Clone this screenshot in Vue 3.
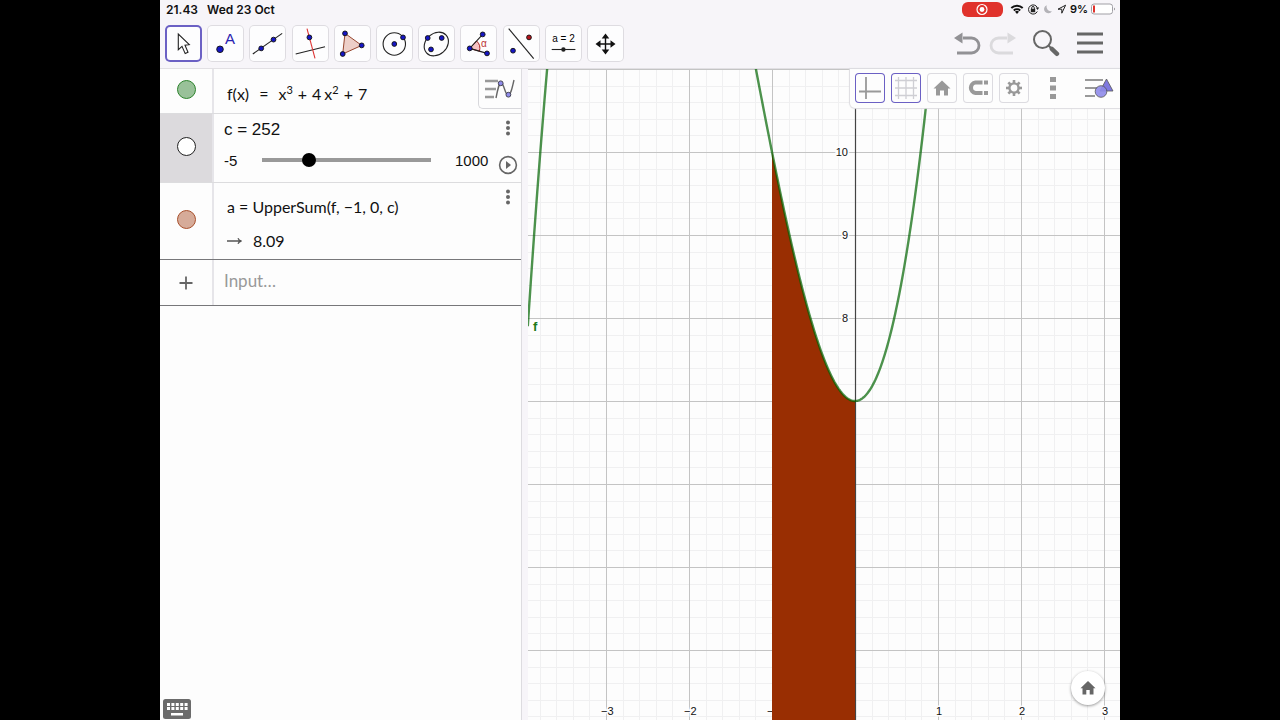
<template>
  <div class="stage">
    <div class="tablet">
      <header class="top">
        <div class="status">
          <span class="time">21.43</span>
          <span>Wed 23 Oct</span>
          <svg class="status-icons" width="108" height="18" viewBox="0 0 108 18">
            <rect x="1" y="2" width="41" height="15" rx="6" fill="#e0322c" />
            <circle cx="21" cy="9.5" r="5" fill="none" stroke="#fff" stroke-width="1.2" />
            <circle cx="21" cy="9.5" r="2.4" fill="#fff" />
            <g fill="none" stroke="#111" stroke-width="2">
              <path d="M50.3 8 A8.2 8.2 0 0 1 61.7 8" />
              <path d="M52.8 10.5 A4.8 4.8 0 0 1 59.2 10.5" />
            </g>
            <path d="M56 14 L54 11.8 A2.8 2.8 0 0 1 58 11.8 Z" fill="#111" />
            <path d="M76.3 7.5 A4.6 4.6 0 1 0 76.3 11.5" fill="none" stroke="#222" />
            <path d="M74.7 7.6 H78.2 L76.6 10 Z" fill="#222" />
            <rect x="69.8" y="8.8" width="4.4" height="3.4" fill="#222" />
            <path d="M70.7 9 V7.8 A1.3 1.3 0 0 1 73.3 7.8 V9" fill="none" stroke="#222" />
            <path d="M85.8 5.2 A4.2 4.2 0 1 0 90.9 11.2 A4.6 4.6 0 0 1 85.8 5.2 Z" fill="#b4b3b8" />
            <path d="M104.6 5.2 L97 9.2 H100.8 V13.2 Z" fill="none" stroke="#222" stroke-linejoin="round" />
          </svg>
          <span class="percent">9%</span>
          <svg width="25" height="12" viewBox="0 0 25 12">
            <rect x="0.5" y="1" width="21" height="10" rx="2.5" fill="#fff" stroke="#a09fa5" />
            <rect x="2" y="2.5" width="2" height="7" fill="#e0322c" />
            <path d="M23 4.5 Q24.5 6 23 7.5 Z" fill="#555" />
          </svg>
        </div>
        <div class="toolbar">
          <div class="tools">
            <button class="tool selected" aria-label="Move">
              <svg viewBox="0 0 37 37"><path d="M13.3 9 V24.7 L17 21.4 L20.2 28.6 L23 27.3 L20 20.3 L24.3 19.7 Z" fill="#fff" stroke="#222" stroke-width="1.1" /></svg>
            </button>
            <button class="tool" aria-label="Point">
              <svg viewBox="0 0 37 37">
                <circle cx="13" cy="24.3" r="3.3" class="dot" />
                <text x="18" y="19" class="point-name">A</text>
              </svg>
            </button>
            <button class="tool" aria-label="Line">
              <svg viewBox="0 0 37 37">
                <path d="M3.8 29 L33.2 8.4" class="ink" />
                <circle cx="12.2" cy="23.4" r="2.4" class="dot" />
                <circle cx="24.5" cy="14.6" r="2.4" class="dot" />
              </svg>
            </button>
            <button class="tool" aria-label="Perpendicular Line">
              <svg viewBox="0 0 37 37">
                <path d="M3.7 29 L33 21.7" class="ink" />
                <path d="M15 3.7 L23 33.4" class="ink red" />
                <circle cx="17.4" cy="12.4" r="2.4" class="dot" />
              </svg>
            </button>
            <button class="tool" aria-label="Polygon">
              <svg viewBox="0 0 37 37">
                <path d="M11 8.4 L27.7 20.4 L8.7 29 Z" fill="#edcfc8" stroke="#96452c" />
                <circle cx="11" cy="8.4" r="2.4" class="dot" />
                <circle cx="27.7" cy="20.4" r="2.4" class="dot" />
                <circle cx="8.7" cy="29" r="2.4" class="dot" />
              </svg>
            </button>
            <button class="tool" aria-label="Circle with Center">
              <svg viewBox="0 0 37 37">
                <circle cx="18.3" cy="19" r="11.2" class="ink" />
                <circle cx="18.3" cy="19" r="2.4" class="dot" />
                <circle cx="27" cy="12.4" r="2.4" class="dot" />
              </svg>
            </button>
            <button class="tool" aria-label="Ellipse">
              <svg viewBox="0 0 37 37">
                <ellipse cx="18.3" cy="19" rx="13.2" ry="10.6" transform="rotate(-42 18.3 19)" class="ink" />
                <circle cx="9.7" cy="13" r="2.4" class="dot" />
                <circle cx="23.7" cy="13" r="2.4" class="dot" />
                <circle cx="13" cy="24.4" r="2.4" class="dot" />
              </svg>
            </button>
            <button class="tool" aria-label="Angle">
              <svg viewBox="0 0 37 37">
                <path d="M9.7 23.4 L16.6 16 A10 10 0 0 1 19.4 26.2 Z" fill="#f7c3c3" stroke="#a22" />
                <path d="M22.7 9.4 L9.7 23.4 L27 28.4" class="ink" />
                <circle cx="9.7" cy="23.4" r="2.4" class="dot" />
                <circle cx="22.7" cy="9.4" r="2.4" class="dot" />
                <circle cx="27" cy="28.4" r="2.4" class="dot" />
                <text x="21" y="22" class="angle-name">α</text>
              </svg>
            </button>
            <button class="tool" aria-label="Reflect about Line">
              <svg viewBox="0 0 37 37">
                <path d="M5.7 3.7 L30.7 33.7" class="ink" />
                <circle cx="10" cy="25.7" r="2.4" class="dot" />
                <circle cx="26" cy="12.4" r="2.4" class="dot red-dot" />
              </svg>
            </button>
            <button class="tool" aria-label="Slider">
              <svg viewBox="0 0 37 37">
                <text x="18.5" y="17" class="slider-name">a = 2</text>
                <path d="M6.7 24.5 H30.4" class="ink" />
                <circle cx="18.4" cy="24.5" r="2.2" fill="#222" />
              </svg>
            </button>
            <button class="tool" aria-label="Move Graphics View">
              <svg viewBox="0 0 37 37">
                <path d="M18.5 12 V26 M11 19 H26" stroke="#111" stroke-width="1.4" />
                <path d="M18.5 8.5 L22.3 13.5 H14.7 Z M18.5 29.5 L22.3 24.5 H14.7 Z M8.5 19 L13.5 15.2 V22.8 Z M28.5 19 L23.5 15.2 V22.8 Z" fill="#111" />
              </svg>
            </button>
          </div>
          <div class="actions">
            <button class="plain" aria-label="Undo">
              <svg width="28" height="26" viewBox="0 0 28 26">
                <path d="M9 8 H17.5 A7.5 7.5 0 0 1 17.5 23 H3" fill="none" stroke="#929195" stroke-width="2.8" />
                <path d="M0 8 L8.5 2.5 V13.5 Z" fill="#929195" />
              </svg>
            </button>
            <button class="plain redo" aria-label="Redo">
              <svg width="28" height="26" viewBox="0 0 28 26">
                <path d="M19 8 H10.5 A7.5 7.5 0 0 0 10.5 23 H25" fill="none" stroke="#dbdadd" stroke-width="2.8" />
                <path d="M28 8 L19.5 2.5 V13.5 Z" fill="#dbdadd" />
              </svg>
            </button>
            <button class="plain search" aria-label="Search">
              <svg width="28" height="28" viewBox="0 0 28 28">
                <circle cx="10.5" cy="10.5" r="8.5" fill="none" stroke="#666" stroke-width="2" />
                <path d="M16.5 16.5 L19.5 19.5" stroke="#666" stroke-width="2" />
                <path d="M19.8 19.8 L25 24.8" stroke="#666" stroke-width="4.4" stroke-linecap="round" />
              </svg>
            </button>
            <button class="plain" aria-label="Menu">
              <svg width="26" height="22" viewBox="0 0 26 22"><path d="M0 2 H26 M0 11 H26 M0 20 H26" stroke="#666" stroke-width="3" /></svg>
            </button>
          </div>
        </div>
      </header>

      <main class="views">
        <section class="algebra">
          <button class="algebra-style" aria-label="Toggle style bar">
            <svg width="30" height="22" viewBox="0 0 30 22">
              <path d="M0 3 H13 M0 11 H11 M0 19 H9" stroke="#999" stroke-width="2.4" />
              <path d="M11 20 C13 10 14 5 16 5 C19 5 20 17 23 17 C26 17 27 10 29 2" fill="none" stroke="#666" stroke-width="1.4" />
              <circle cx="15.7" cy="5.3" r="2.4" class="violet" />
              <circle cx="23.4" cy="16.7" r="2.4" class="violet" />
            </svg>
          </button>

          <div class="row row-function">
            <div class="marble-cell"><button class="marble green" aria-label="Show or hide f"></button></div>
            <div class="cell formula">
              <span>f(x)</span><span class="eq">=</span><span>x<sup>3</sup></span><span class="op">+</span><span>4</span><span class="factor">x<sup>2</sup></span><span class="op">+</span><span>7</span>
            </div>
          </div>

          <div class="row row-slider">
            <div class="marble-cell active"><button class="marble" aria-label="Show or hide c"></button></div>
            <div class="cell">
              <label class="slider-label" for="c-slider">c = {{ c }}</label>
              <div class="slider-line">
                <span class="slider-min">-5</span>
                <input id="c-slider" v-model.number="c" class="range" type="range" min="-5" max="1000">
                <span class="slider-max">1000</span>
              </div>
            </div>
            <div class="side">
              <button class="plain" aria-label="More options for c"><svg width="6" height="18" viewBox="0 0 6 18"><use href="#kebab" /></svg></button>
              <button class="plain" aria-label="Play">
                <svg width="20" height="20" viewBox="0 0 20 20">
                  <circle cx="10" cy="10" r="8.4" fill="none" stroke="#666" stroke-width="1.6" />
                  <path d="M8 6 L13 10 L8 14 Z" fill="#666" />
                </svg>
              </button>
            </div>
          </div>

          <div class="row row-sum">
            <div class="marble-cell"><button class="marble brown" aria-label="Show or hide a"></button></div>
            <div class="cell formula sum">
              <div>a = UpperSum(f, −1, 0, c)</div>
              <div class="result">
                <svg width="15" height="8" viewBox="0 0 15 8"><path d="M0 4 H14 M11 1.2 Q12 3.6 14.5 4 Q12 4.4 11 6.8" fill="none" stroke="#555" stroke-width="1.3" /></svg>
                <span>8.09</span>
              </div>
            </div>
            <div class="side">
              <button class="plain" aria-label="More options for a"><svg width="6" height="18" viewBox="0 0 6 18"><use href="#kebab" /></svg></button>
            </div>
          </div>

          <div class="row row-input">
            <div class="marble-cell">
              <button class="plain" aria-label="Add">
                <svg width="14" height="14" viewBox="0 0 14 14"><path d="M7 0.5 V13.5 M0.5 7 H13.5" stroke="#666" stroke-width="1.8" /></svg>
              </button>
            </div>
            <input v-model="entry" class="entry" type="text" placeholder="Input…" aria-label="Input">
          </div>

          <button class="plain keyboard" aria-label="Keyboard">
            <svg width="28" height="20" viewBox="0 0 28 20">
              <rect width="28" height="20" rx="2.5" fill="#6b6b6b" />
              <path d="M4 5.5 H25 M4 9.5 H25" stroke="#fff" stroke-width="3" stroke-dasharray="3 1.4" />
              <rect x="8" y="14" width="12" height="2.5" fill="#fff" />
            </svg>
          </button>
          <svg class="defs" width="0" height="0">
            <g id="kebab" fill="#666">
              <circle cx="3" cy="3.5" r="2" /><circle cx="3" cy="9" r="2" /><circle cx="3" cy="14.5" r="2" />
            </g>
          </svg>
        </section>

        <section class="graphics">
          <svg class="plot" viewBox="0 0 592 651" preserveAspectRatio="xMidYMid slice">
            <path :d="minorGrid" stroke="#f0f0f1" />
            <path :d="majorGrid" stroke="#c4c4c4" />
            <path d="M327.5 0 V651" stroke="#444" stroke-width="1.2" />
            <g class="axis-label">
              <text v-for="n in [8, 9, 10]" :key="'y' + n" x="320" :y="py(n) + 4" text-anchor="end">{{ n }}</text>
              <text v-for="n in [-3, -2, -1, 1, 2, 3]" :key="'x' + n" :x="px(n) + (n < 0 ? -5 : -2)" y="646">{{ String(n).replace('-', '−') }}</text>
            </g>
            <path :d="area" fill="#992e02" />
            <path :d="curve" fill="none" stroke="#006400" stroke-opacity="0.7" stroke-width="2.4" />
            <text x="5" y="262" class="curve-name">f</text>
          </svg>

          <div class="graphics-style">
            <button class="option on" aria-label="Axes">
              <svg viewBox="0 0 30 30"><path d="M11 4 V26 M4 18.5 H26" stroke="#999" stroke-width="1.8" /></svg>
            </button>
            <button class="option on" aria-label="Grid">
              <svg viewBox="0 0 30 30"><path d="M7.5 4 V26 M15 4 V26 M22.5 4 V26 M4 7.5 H26 M4 15 H26 M4 22.5 H26" stroke="#cfcfd4" stroke-width="1.3" /></svg>
            </button>
            <button class="option" aria-label="Standard view">
              <svg viewBox="0 0 30 30"><path d="M15 7.5 L23.5 15.5 H21 V22.5 H17 V17.5 H13 V22.5 H9 V15.5 H6.5 Z" fill="#999" /></svg>
            </button>
            <button class="option" aria-label="Point capturing">
              <svg viewBox="0 0 30 30">
                <path d="M19.5 9.5 H12.5 A5.3 5.3 0 0 0 12.5 20 H19.5" fill="none" stroke="#999" stroke-width="4.2" />
                <path d="M21 9.5 H25 M21 20 H25" stroke="#999" stroke-width="4.2" />
              </svg>
            </button>
            <button class="option" aria-label="Settings">
              <svg viewBox="0 0 30 30">
                <circle cx="15" cy="15" r="4.6" fill="none" stroke="#999" stroke-width="2.4" />
                <path v-for="i in 8" :key="i" d="M15 7 V10" :transform="`rotate(${i * 45} 15 15)`" stroke="#999" stroke-width="2.6" />
              </svg>
            </button>
            <button class="plain more" aria-label="More">
              <svg width="6" height="24" viewBox="0 0 6 24"><path d="M0 1 H6 V6 H0 Z M0 9.5 H6 V14.5 H0 Z M0 18 H6 V23 H0 Z" fill="#999" /></svg>
            </button>
            <button class="plain" aria-label="Toggle graphics style bar">
              <svg width="30" height="22" viewBox="0 0 30 22">
                <path d="M1 3 H19 M1 11 H13 M1 19 H11" stroke="#999" stroke-width="2.2" />
                <path d="M22.5 2 L29 14 H16 Z" fill="#7f79e0" stroke="#555" stroke-width="0.8" />
                <circle cx="17" cy="14.5" r="5.8" fill="#8f8bea" fill-opacity="0.9" stroke="#555" stroke-width="0.8" />
              </svg>
            </button>
          </div>

          <button class="home" aria-label="Home">
            <svg width="16" height="14" viewBox="0 0 16 14"><path d="M8 0 L15.5 7.2 H13.5 V13.5 H9.7 V9 H6.3 V13.5 H2.5 V7.2 H0.5 Z" fill="#666" /></svg>
          </button>
        </section>
      </main>
    </div>
  </div>
</template>

<script setup>
import { ref } from 'vue';

const c = ref(252);
const entry = ref('');

// Posición del origen y píxeles por unidad
const originX = 327;
const y7 = 332;
const unit = 83;

const f = (x) => x ** 3 + 4 * x ** 2 + 7;
const px = (x) => originX + x * unit;
const py = (y) => y7 - (y - 7) * unit;

function gridLines(step, every) {
  let d = '';
  for (let i = -20; i <= 20; i++) {
    if (every && i % every === 0) continue;
    d += `M${Math.round(px(i * step)) + 0.5} 0 V651`;
    d += `M0 ${Math.round(py(7 + i * step)) + 0.5} H592`;
  }
  return d;
}

const minorGrid = gridLines(0.2, 5);
const majorGrid = gridLines(1);

function sample(from, to) {
  const points = [];
  const n = 400;
  for (let i = 0; i <= n; i++) {
    const x = from + ((to - from) * i) / n;
    points.push(`${px(x).toFixed(2)} ${py(f(x)).toFixed(2)}`);
  }
  return points.join(' L');
}

const curve = `M${sample(-3.942, 1.1)}`;
const area = `M${sample(-1, 0)} V651 H${px(-1)} Z`;
</script>

<style>
body {
  background: #000;
}
</style>

<style scoped>
.stage {
  min-height: 100vh;
  background: #000;
  font-family: "Liberation Sans", Arial, sans-serif;
  color: #111;
}

.tablet {
  display: flex;
  flex-direction: column;
  width: calc(100vh * 4 / 3);
  max-width: 100%;
  height: 100vh;
  margin: 0 auto;
  background: #f7f5f9;
  overflow: hidden;
}

button {
  margin: 0;
  padding: 0;
  border: 0;
  font: inherit;
  cursor: pointer;
}

svg {
  display: block;
}

.plain {
  background: none;
}

.top {
  border-bottom: 1px solid #e2e0e4;
}

.status {
  display: flex;
  align-items: center;
  height: 18px;
  padding: 0 4px 0 6px;
  font-family: Inter, sans-serif;
  font-size: 12px;
  font-weight: 600;
}

.time {
  margin-right: 9px;
}

.status-icons {
  margin-left: auto;
}

.percent {
  margin: 0 3px 0 1px;
  font-size: 11px;
}

.toolbar {
  display: flex;
  justify-content: space-between;
  align-items: center;
  height: 50px;
  padding: 0 17px 0 5px;
}

.tools {
  display: flex;
  justify-content: space-between;
  flex: 0 1 459px;
}

.tool {
  width: 37px;
  height: 37px;
  border-radius: 5px;
  background: #fdfdfe;
  box-shadow: inset 0 0 0 1px #dedce1;
}

.tool.selected {
  box-shadow: inset 0 0 0 2px #6b60c4;
}

.ink {
  fill: none;
  stroke: #222;
  stroke-width: 1.1;
}

.ink.red {
  stroke: #d33;
}

.dot {
  fill: #1616c4;
  stroke: #111;
  stroke-width: 0.9;
}

.red-dot {
  fill: #b3141c;
}

.point-name {
  fill: #2a22b0;
  font-size: 15px;
}

.angle-name {
  fill: #b33;
  font-size: 10px;
}

.slider-name {
  font-size: 10px;
  text-anchor: middle;
}

.actions {
  display: flex;
  align-items: center;
}

.redo {
  margin: 0 16px 0 6px;
}

.search {
  margin-right: 17px;
}

.views {
  display: flex;
  flex: 1;
  min-height: 0;
}

.algebra {
  position: relative;
  display: flex;
  flex-direction: column;
  flex: 0 1 362px;
  background: #fdfdfd;
  border-right: 1px solid #dddce0;
  box-sizing: border-box;
}

.algebra-style {
  position: absolute;
  top: 0;
  right: 0;
  display: flex;
  align-items: center;
  justify-content: center;
  width: 43px;
  height: 40px;
  background: #fdfdfd;
  border-left: 1px solid #d8d8dc;
  border-bottom: 1px solid #d8d8dc;
  border-bottom-left-radius: 5px;
}

.violet {
  fill: #8f8bea;
  stroke: #445;
}

.row {
  display: flex;
  border-bottom: 1px solid #dcdcde;
}

.row-function {
  height: 44px;
}

.row-slider {
  height: 68px;
}

.row-sum {
  height: 76px;
  border-color: #77777a;
}

.row-input {
  height: 45px;
  border-color: #77777a;
}

.marble-cell {
  display: flex;
  align-items: center;
  justify-content: center;
  flex: 0 0 52px;
  border-right: 2px solid #e6e5e9;
}

.marble-cell.active {
  background: #dcdadd;
}

.marble {
  width: 19px;
  height: 19px;
  margin-bottom: 4px;
  border: 1px solid #222;
  border-radius: 50%;
  background: #fff;
}

.marble.green {
  background: #99c199;
  border-color: #2c832c;
}

.marble.brown {
  background: #d6ab99;
  border-color: #a8502c;
}

.cell {
  flex: 1;
  min-width: 0;
  padding-left: 10px;
}

.formula {
  padding-left: 13px;
  font-family: Lato, sans-serif;
  font-size: 16px;
}

.row-function .formula {
  display: flex;
  align-items: center;
  padding-top: 4px;
}

.formula sup {
  font-size: 11px;
  line-height: 0;
  vertical-align: 6px;
}

.eq {
  margin: 0 10px;
}

.op {
  margin: 0 5px;
}

.factor {
  margin-left: 3px;
}

.slider-label {
  display: block;
  padding-top: 6px;
  font-size: 17px;
  line-height: 20px;
}

.slider-line {
  display: flex;
  align-items: center;
  height: 40px;
  font-size: 15px;
}

.slider-min {
  width: 38px;
}

.range {
  flex: 1;
  min-width: 0;
  height: 14px;
  margin: 0;
  appearance: none;
  background: linear-gradient(#999, #999) center / 100% 4px no-repeat;
}

.range::-webkit-slider-thumb {
  appearance: none;
  width: 14px;
  height: 14px;
  border-radius: 50%;
  background: #000;
}

.slider-max {
  width: 40px;
  margin-left: 24px;
}

.side {
  display: flex;
  flex-direction: column;
  align-items: center;
  justify-content: space-between;
  flex: 0 0 20px;
  padding: 5px 3px 7px;
}

.sum {
  display: flex;
  flex-direction: column;
  gap: 14px;
  padding-top: 14px;
  line-height: 20px;
}

.result {
  display: flex;
  align-items: center;
  gap: 11px;
}

.entry {
  flex: 1;
  min-width: 0;
  padding: 0 10px 4px;
  border: 0;
  outline: none;
  background: none;
  font-family: Lato, sans-serif;
  font-size: 17px;
}

.entry::placeholder {
  color: #999;
}

.keyboard {
  align-self: flex-start;
  margin: auto 0 1px 3px;
}

.defs {
  position: absolute;
}

.graphics {
  position: relative;
  flex: 1;
  min-width: 0;
  margin-left: 6px;
  background: #fdfdfd;
}

.plot {
  width: 100%;
  height: 100%;
}

.axis-label {
  font-size: 11px;
  fill: #111;
  stroke: #fdfdfd;
  stroke-width: 3px;
  paint-order: stroke;
}

.curve-name {
  fill: #1c7a1c;
  font-size: 13px;
  font-weight: 700;
}

.graphics-style {
  position: absolute;
  top: 0;
  right: 0;
  display: flex;
  align-items: center;
  gap: 6px;
  padding: 4px 6px 5px 5px;
  background: #fdfdfd;
  border-bottom-left-radius: 5px;
  box-shadow: 0 0 1px 1px #dddce0;
}

.option {
  width: 30px;
  height: 30px;
  border-radius: 4px;
  background: #fdfdfd;
  box-shadow: inset 0 0 0 1px #dcdbe0;
}

.option.on {
  box-shadow: inset 0 0 0 1px #6b60c4;
}

.more {
  margin: 0 22px 0 15px;
}

.home {
  position: absolute;
  right: 15px;
  bottom: 15px;
  display: flex;
  align-items: center;
  justify-content: center;
  width: 34px;
  height: 34px;
  border-radius: 50%;
  background: #fff;
  box-shadow: 0 1px 3px rgba(0, 0, 0, 0.4);
}
</style>
